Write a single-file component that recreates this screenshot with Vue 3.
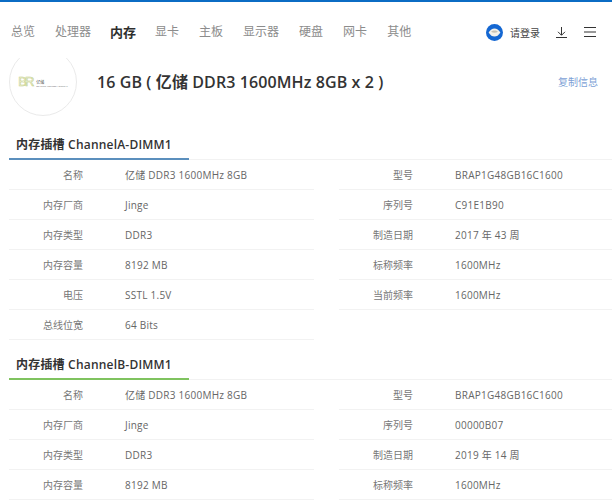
<script setup>
const tabs = ['总览', '处理器', '内存', '显卡', '主板', '显示器', '硬盘', '网卡', '其他']
const slots = [
  {
    name: 'ChannelA-DIMM1', tone: 'blue',
    left: [['名称', '亿储 DDR3 1600MHz 8GB'], ['内存厂商', 'Jinge'], ['内存类型', 'DDR3'], ['内存容量', '8192 MB'], ['电压', 'SSTL 1.5V'], ['总线位宽', '64 Bits']],
    right: [['型号', 'BRAP1G48GB16C1600'], ['序列号', 'C91E1B90'], ['制造日期', '2017 年 43 周'], ['标称频率', '1600MHz'], ['当前频率', '1600MHz']]
  },
  {
    name: 'ChannelB-DIMM1', tone: 'green',
    left: [['名称', '亿储 DDR3 1600MHz 8GB'], ['内存厂商', 'Jinge'], ['内存类型', 'DDR3'], ['内存容量', '8192 MB']],
    right: [['型号', 'BRAP1G48GB16C1600'], ['序列号', '00000B07'], ['制造日期', '2019 年 14 周'], ['标称频率', '1600MHz']]
  }
]
</script>

<template>
  <div class="page">
    <header class="topbar">
      <nav class="tabs">
        <span v-for="t in tabs" :key="t" class="tab" :class="{ active: t === '内存' }">{{ t }}</span>
      </nav>
      <div class="tools">
        <svg class="avatar" width="17" height="17" viewBox="0 0 17 17">
          <circle cx="8.500" cy="8.500" r="8.500" fill="#1467d2" />
          <path d="M2.600 8.500C4.400 5.600 6.300 4.400 8.500 4.400s4.100 1.200 5.900 4.100c-1.800 2.900-3.700 4.100-5.900 4.100S4.400 11.400 2.600 8.500z" fill="#f3f1ea" />
          <path d="M5 7.800c1-.9 2.200-1.300 3.500-1.300s2.500.4 3.500 1.300c-1.200.6-2.300.9-3.500.9S6.200 8.400 5 7.800z" fill="#c9c3b4" />
        </svg>
        <span class="login">请登录</span>
        <svg class="download" width="11" height="11" viewBox="0 0 11 11" fill="none" stroke="#333" stroke-width="1">
          <path d="M5.500 0v8M2 4.800l3.500 3.500L9 4.800M0 10.500h11" />
        </svg>
        <svg class="menu" width="12" height="10" viewBox="0 0 12 10" fill="none" stroke="#333" stroke-width="1">
          <path d="M0 .5h12M0 5h12M0 9.500h12" />
        </svg>
      </div>
    </header>

    <section class="summary">
      <div class="brand">
        <div class="brand-mark">
          <span class="br">BR</span>
          <div class="brand-text">
            <span class="cn">亿储</span>
            <span class="en">BR LUCK MEMORY DIGITAL</span>
          </div>
        </div>
      </div>
      <h1 class="title">16 GB ( 亿储 DDR3 1600MHz 8GB x 2 )</h1>
      <a class="copy">复制信息</a>
    </section>

    <section v-for="s in slots" :key="s.name" class="slot">
      <div class="slot-head">
        <h2 class="slot-title" :class="s.tone">内存插槽 {{ s.name }}</h2>
      </div>
      <div class="cols">
        <div class="col">
          <div v-for="r in s.left" :key="r[0]" class="row">
            <span class="label">{{ r[0] }}</span>
            <span class="value">{{ r[1] }}</span>
          </div>
        </div>
        <div class="col">
          <div v-for="r in s.right" :key="r[0]" class="row">
            <span class="label">{{ r[0] }}</span>
            <span class="value">{{ r[1] }}</span>
          </div>
        </div>
      </div>
    </section>
  </div>
</template>

<style>
html, body { margin: 0; background: #fff; overflow: hidden; }
</style>

<style scoped>
.page {
  width: 612px;
  height: 500px;
  overflow: hidden;
  background: #fff;
  font-family: "Open Sans", "Noto Sans CJK SC", sans-serif;
  color: #666;
}
.topbar {
  position: relative;
  z-index: 2;
  box-sizing: border-box;
  height: 58px;
  padding: 0 16px 0 11px;
  display: flex;
  justify-content: space-between;
  align-items: flex-start;
  background: #fff;
  border-top: 2px solid #0b6cc4;
}
.tabs {
  display: flex;
  gap: 20px;
  margin-top: 21px;
  height: 18px;
  align-items: center;
}
.tab {
  font-size: 12px;
  line-height: 18px;
  color: #8c8c8c;
  white-space: nowrap;
}
.tab.active {
  margin: 0 -1px;
  font-size: 13px;
  font-weight: 700;
  color: #2e2e2e;
}
.tools {
  display: flex;
  align-items: center;
  height: 18px;
  margin-top: 21px;
}
.avatar { margin-right: 7px; }
.login {
  font-size: 10px;
  color: #444;
  margin-right: 16px;
  white-space: nowrap;
}
.download { margin-right: 17px; }
.summary {
  position: relative;
  z-index: 1;
  display: flex;
  align-items: center;
  margin-top: -10px;
  margin-bottom: 5px;
  height: 68px;
  padding: 0 14px 0 9px;
}
.brand {
  box-sizing: border-box;
  width: 68px;
  height: 68px;
  flex: none;
  border: 1px solid #eaeaea;
  border-radius: 50%;
  display: flex;
  align-items: center;
  justify-content: center;
  margin-right: 20px;
}
.brand-mark {
  display: flex;
  align-items: flex-end;
  gap: 2px;
}
.br {
  font-family: "Liberation Sans", sans-serif;
  font-size: 13px;
  line-height: 12px;
  color: transparent;
  -webkit-text-stroke: 0.6px #bfcd80;
  letter-spacing: -2px;
  margin-right: 2px;
}
.brand-text {
  display: flex;
  flex-direction: column;
}
.cn {
  font-size: 4px;
  line-height: 5px;
  color: #555;
}
.en {
  font-size: 2.500px;
  line-height: 3px;
  color: #666;
  white-space: nowrap;
}
.title {
  flex: 1;
  margin: 0 0 3px;
  font-size: 16px;
  letter-spacing: .1px;
  font-weight: 600;
  color: #333;
  white-space: nowrap;
}
.copy {
  font-size: 10px;
  color: #7d9fd6;
  white-space: nowrap;
  margin-bottom: 1px;
}
.slot { padding-left: 9px; }
.slot + .slot { margin-top: 1px; }
.slot-head {
  box-sizing: border-box;
  height: 39px;
  display: flex;
  align-items: flex-end;
  border-bottom: 1px solid #f2f2f2;
}
.slot-title {
  box-sizing: border-box;
  width: 180px;
  height: 24px;
  margin: 0 0 -1px;
  padding-left: 7px;
  font-size: 12px;
  letter-spacing: .2px;
  line-height: 18px;
  font-weight: 600;
  color: #333;
  white-space: nowrap;
  border-bottom: 2px solid;
}
.slot-title.blue { border-color: #5b8fbd; }
.slot-title.green { border-color: #7fc35f; }
.cols {
  display: grid;
  grid-template-columns: 305px 273px;
  column-gap: 25px;
}
.cols .col:last-child { margin-right: -34px; }
.row {
  box-sizing: border-box;
  height: 30px;
  display: flex;
  align-items: center;
  border-bottom: 1px solid #f2f2f2;
  font-size: 10px;
  white-space: nowrap;
}
.label {
  width: 74px;
  text-align: right;
  color: #777;
  flex: none;
}
.value {
  margin-left: 42px;
  color: #666;
  letter-spacing: .25px;
}
</style>
